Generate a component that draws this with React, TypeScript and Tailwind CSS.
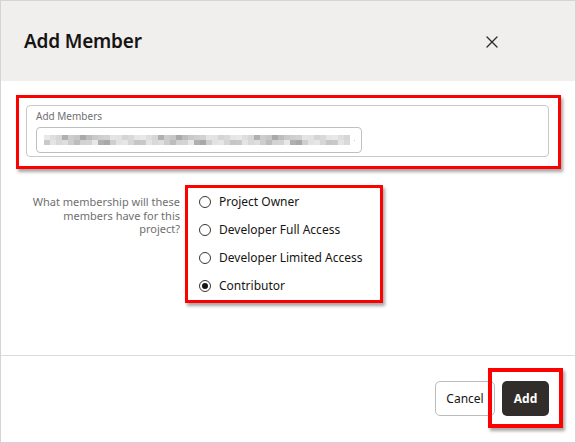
import React from "react";

const shades = [
  "#e4e4e4", "#d6d6d6", "#cfcfcf", "#e8e8e8", "#bdbdbd", "#d9d9d9", "#c6c6c6", "#e2e2e2",
  "#b0b0b0", "#d2d2d2", "#dedede", "#c9c9c9", "#e6e6e6", "#a9a9a9", "#d4d4d4", "#cdcdcd",
];
const row1 = Array.from({ length: 51 }, (_, i) => shades[(i * 7 + 3) % shades.length]);
const row2 = Array.from({ length: 51 }, (_, i) => shades[(i * 5 + 11) % shades.length]);

function Radio({ checked }: { checked?: boolean }) {
  return (
    <span className="w-[12px] h-[12px] rounded-full border border-[#3a3632] flex items-center justify-center shrink-0 bg-white">
      {checked && <span className="w-[6px] h-[6px] rounded-full bg-[#161513]" />}
    </span>
  );
}

const opts = ["Project Owner", "Developer Full Access", "Developer Limited Access", "Contributor"];

export default function App() {
  return (
    <div
      className="w-[576px] h-[443px] flex flex-col border border-[#d4d4d4] bg-white overflow-hidden"
      style={{ fontFamily: '"Noto Sans", "Open Sans", sans-serif' }}
    >
      <div className="h-[80px] bg-[#f1efed] flex items-center justify-between pl-[23px] pr-[77px] shrink-0">
        <div className="text-[19px] font-semibold text-[#161513] tracking-[-0.2px] mt-[1px]">Add Member</div>
        <svg width="12" height="12" viewBox="0 0 12 12" className="mt-[1px]">
          <path d="M1 1 L11 11 M11 1 L1 11" stroke="#2b2826" strokeWidth="1.3" strokeLinecap="round" />
        </svg>
      </div>

      <div className="flex-1 flex flex-col">
        <div className="mt-[14px] ml-[15px] mr-[14px] border-[3px] border-[#ff0000] shadow-[2px_3px_3px_rgba(0,0,0,0.35)] pt-[7px] pb-[9px] pl-[7px] pr-[9px]">
          <div className="h-[52px] border border-[#c9c9c9] rounded-[4px] pl-[9px] pt-[3px]">
            <div className="text-[10px] leading-[14px] text-[#6f6f6f]">Add Members</div>
            <div className="mt-[4px] w-[326px] h-[26px] border border-[#bfbfbf] rounded-[4px] flex items-center pl-[7px] pr-[6px]">
              <div className="flex flex-col">
                <div className="flex">
                  {row1.map((c, i) => (
                    <span key={i} className="w-[6px] h-[5px]" style={{ background: c }} />
                  ))}
                </div>
                <div className="flex">
                  {row2.map((c, i) => (
                    <span key={i} className="w-[6px] h-[5px]" style={{ background: c }} />
                  ))}
                </div>
              </div>
              <svg width="9" height="9" viewBox="0 0 9 9" className="ml-[4px]">
                <path d="M1 1 L8 8 M8 1 L1 8" stroke="#2b2826" strokeWidth="1.3" strokeLinecap="round" />
              </svg>
            </div>
          </div>
        </div>

        <div className="flex mt-[16px]">
          <div className="w-[150px] ml-[29px] text-right text-[11px] leading-[13.5px] text-[#6f6f6f] pt-[10px]">
            What membership will these members have for this project?
          </div>
          <div className="ml-[5px] w-[198px] h-[118px] border-[3px] border-[#ff0000] shadow-[2px_3px_3px_rgba(0,0,0,0.35)] pl-[11px] flex flex-col">
            {opts.map((o, i) => (
              <div key={o} className="h-[28px] flex items-center gap-[8px]">
                <Radio checked={i === 3} />
                <span className="text-[12px] text-[#161513]">{o}</span>
              </div>
            ))}
          </div>
        </div>
      </div>

      <div className="h-[87px] border-t border-[#dcdcdc] flex justify-end items-start pr-[26px] pt-[25px] shrink-0">
        <button className="w-[60px] h-[35px] border border-[#bcbcbc] rounded-[5px] bg-white text-[12px] text-[#161513]">
          Cancel
        </button>
        <div className="relative ml-[7px]">
          <button className="w-[47px] h-[35px] rounded-[5px] bg-[#312d2a] text-[12px] font-bold text-white">
            Add
          </button>
          <div className="absolute left-[-14px] right-[-14px] top-[-13px] bottom-[-12px] border-[4px] border-[#ff0000] shadow-[2px_3px_3px_rgba(0,0,0,0.35)] pointer-events-none" />
        </div>
      </div>
    </div>
  );
}
